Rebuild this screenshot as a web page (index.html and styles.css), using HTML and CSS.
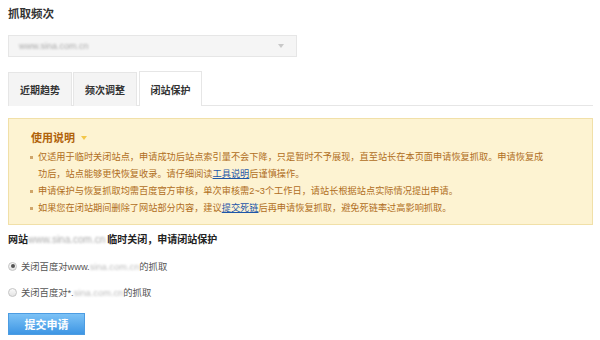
FILE: index.html
```html
<!DOCTYPE html>
<html lang="zh-CN">
<head>
  <meta charset="UTF-8" />
  <title>抓取频次</title>
  <link rel="stylesheet" href="styles.css">
</head>
<body>
  <div class="page">
    <h2 class="title">抓取频次</h2>

    <div class="select">
      <span class="blur">www.sina.com.cn</span>
      <span class="arrow"></span>
    </div>

    <div class="tabs">
      <div class="tab">近期趋势</div>
      <div class="tab">频次调整</div>
      <div class="tab active">闭站保护</div>
    </div>

    <div class="notice">
      <div class="notice-title">使用说明 <span class="tri"></span></div>
      <ul>
        <li>仅适用于临时关闭站点，申请成功后站点索引量不会下降，只是暂时不予展现，直至站长在本页面申请恢复抓取。申请恢复成功后，站点能够更快恢复收录。请仔细阅读<a href="#">工具说明</a>后谨慎操作。</li>
        <li>申请保护与恢复抓取均需百度官方审核，单次审核需2~3个工作日，请站长根据站点实际情况提出申请。</li>
        <li>如果您在闭站期间删除了网站部分内容，建议<a href="#">提交死链</a>后再申请恢复抓取，避免死链率过高影响抓取。</li>
      </ul>
    </div>

    <div class="site-line">网站<span class="blur">www.sina.com.cn</span>临时关闭，申请闭站保护</div>

    <label class="radio">
      <input type="radio" name="scope" checked>
      <span>关闭百度对www.<span class="blur">sina.com.cn</span>的抓取</span>
    </label>
    <label class="radio">
      <input type="radio" name="scope">
      <span>关闭百度对*.<span class="blur">sina.com.cn</span>的抓取</span>
    </label>

    <button class="submit">提交申请</button>
  </div>
</body>
</html>
```

FILE: styles.css
```css
* {
  box-sizing: border-box;
}

body {
  margin: 0;
  background: #fff;
  font-family: "Liberation Sans", "Noto Sans CJK SC", sans-serif;
  color: #333;
}

.page {
  padding: 6px 7px 0 8px;
}

.title {
  margin: 0;
  font-size: 11.5px;
  line-height: 16px;
  font-weight: bold;
  color: #333;
}

.blur {
  color: #999;
  filter: blur(1.2px);
}

.select {
  margin-top: 13px;
  width: 289px;
  height: 22px;
  background: #f5f5f5;
  border: 1px solid #e6e6e6;
  display: flex;
  align-items: center;
  justify-content: space-between;
  padding: 0 10px;
  font-size: 9px;
}

.select .blur {
  color: #aaa;
}

.arrow {
  width: 0;
  height: 0;
  border-left: 3px solid transparent;
  border-right: 3px solid transparent;
  border-top: 4px solid #c8c8c8;
  margin-right: 2px;
}

.tabs {
  margin-top: 15px;
  display: flex;
  align-items: flex-end;
  gap: 1px;
  border-bottom: 1px solid #e6e6e6;
  height: 34px;
}

.tab {
  width: 64px;
  height: 34px;
  margin-bottom: -1px;
  background: #f4f4f4;
  border: 1px solid #e6e6e6;
  border-bottom: none;
  display: flex;
  align-items: center;
  justify-content: center;
  font-size: 10px;
  font-weight: bold;
  color: #333;
}

.tab.active {
  margin-left: 1px;
  width: 63px;
  background: #fff;
  height: 35px;
}

.notice {
  margin-top: 12px;
  background: #fdf3d2;
  border: 1px solid #f1e0a8;
  padding: 11px 10px 8px 21px;
  height: 107px;
  color: #b06e22;
}

.notice-title {
  display: flex;
  align-items: center;
  gap: 6px;
  padding-left: 1px;
  font-size: 11px;
  line-height: 16px;
  font-weight: bold;
  color: #b0620a;
}

.tri {
  width: 0;
  height: 0;
  border-left: 3px solid transparent;
  border-right: 3px solid transparent;
  border-top: 4px solid #f3c74a;
}

.notice ul {
  margin: 3px 0 0;
  padding: 0;
  list-style: none;
}

.notice li {
  position: relative;
  padding-left: 8px;
  width: 518px;
  font-size: 9.2px;
  line-height: 17px;
}

.notice li::before {
  content: "";
  position: absolute;
  left: 0;
  top: 7px;
  width: 3px;
  height: 3px;
  background: #cfa56a;
}

.notice a {
  color: #1d56a8;
}

.site-line {
  margin-top: 7px;
  font-size: 10px;
  line-height: 16px;
  font-weight: bold;
  color: #222;
}

.site-line .blur {
  color: #aaa;
  font-weight: normal;
  padding-right: 2px;
}

.radio {
  margin-top: 10px;
  display: flex;
  align-items: center;
  gap: 4px;
  height: 16px;
  font-size: 9.3px;
  color: #555;
}

.radio input {
  appearance: none;
  margin: 0;
  width: 9px;
  height: 9px;
  border-radius: 50%;
  border: 1px solid #c4c4c4;
  background: linear-gradient(#fafafa, #e4e4e4);
  position: relative;
}

.radio input:checked::after {
  content: "";
  position: absolute;
  left: 1.5px;
  top: 1.5px;
  width: 4px;
  height: 4px;
  border-radius: 50%;
  background: #555;
}

.radio .blur {
  color: #bbb;
}

.submit {
  margin-top: 13px;
  width: 77px;
  height: 22px;
  border: 1px solid #4c9ce2;
  background: linear-gradient(#7cc2f6, #3e96e4);
  color: #fff;
  font-family: "Noto Sans CJK SC", sans-serif;
  font-size: 11px;
  font-weight: bold;
  padding: 0;
  cursor: pointer;
}
```
